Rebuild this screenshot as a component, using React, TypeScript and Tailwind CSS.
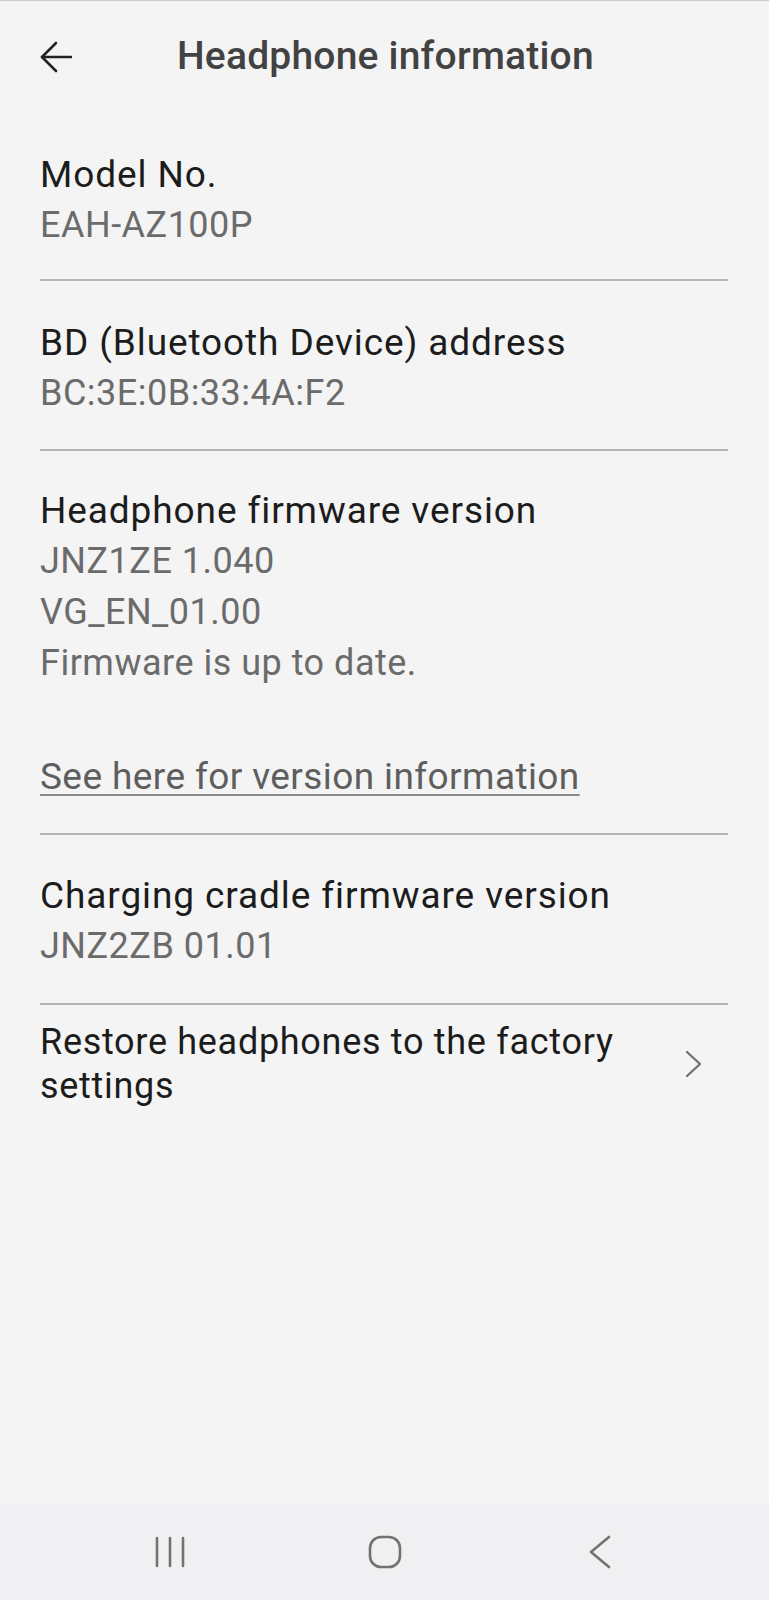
import React from "react";

const Divider = () => <div className="h-[2px] bg-[#b4b4b4]" />;

function Primary({ children }: { children: React.ReactNode }) {
  return <div className="text-[37px] leading-[51px] tracking-[0.9px] text-[#1c1c1c]">{children}</div>;
}
function Secondary({ children }: { children: React.ReactNode }) {
  return <div className="text-[36px] leading-[51px] tracking-[0.5px] text-[#6b6b6b]">{children}</div>;
}

export default function App() {
  return (
    <div
      className="w-[769px] h-[1600px] flex flex-col bg-[#f4f4f4] border-t border-[#cacaca]"
      style={{ fontFamily: "Roboto, 'Noto Sans', sans-serif" }}
    >
      <div className="flex-1 flex flex-col">
        {/* Header */}
        <div className="h-[111px] flex items-center pl-[40px]">
          <svg width="32" height="32" viewBox="0 0 32 32" fill="none" stroke="#222" strokeWidth="2.6" strokeLinecap="round" strokeLinejoin="round">
            <path d="M2 16 H31" />
            <path d="M16 2 L2 16 L16 30" />
          </svg>
          <div className="ml-[105px] text-[39px] leading-none font-medium tracking-[0.2px] text-[#424242]">
            Headphone information
          </div>
        </div>

        <div className="px-[40px] pr-[41px]">
          <div className="pt-[37px] pb-[28px]">
            <Primary>Model No.</Primary>
            <Secondary>EAH-AZ100P</Secondary>
          </div>
          <Divider />
          <div className="pt-[36px] pb-[30px]">
            <Primary>BD (Bluetooth Device) address</Primary>
            <Secondary>BC:3E:0B:33:4A:F2</Secondary>
          </div>
          <Divider />
          <div className="pt-[34px] pb-[31px]">
            <Primary>Headphone firmware version</Primary>
            <Secondary>JNZ1ZE 1.040</Secondary>
            <Secondary>VG_EN_01.00</Secondary>
            <Secondary>Firmware is up to date.</Secondary>
            <div className="mt-[62px] text-[37px] leading-[51px] tracking-[0.4px] text-[#5e5e5e] underline decoration-[#8a8a8a] decoration-2 underline-offset-[5px]">
              See here for version information
            </div>
          </div>
          <Divider />
          <div className="pt-[35px] pb-[31px]">
            <Primary>Charging cradle firmware version</Primary>
            <Secondary>JNZ2ZB 01.01</Secondary>
          </div>
          <Divider />
          <div className="pt-[15px] pb-[15px] flex items-center">
            <div className="flex-1 text-[36px] leading-[44px] tracking-[0.7px] text-[#1c1c1c]">
              Restore headphones to the factory
              <br />
              settings
            </div>
            <svg width="17" height="28" viewBox="0 0 17 28" fill="none" stroke="#6d6d6d" strokeWidth="2.2" strokeLinecap="round" strokeLinejoin="round" className="mr-[26px]">
              <path d="M2 2 L15 14 L2 26" />
            </svg>
          </div>
        </div>
      </div>

      {/* Nav bar */}
      <div className="h-[97px] bg-[#f0f0f2] flex justify-center items-center">
        <div className="w-[215px] flex justify-center">
          <svg width="30" height="32" viewBox="0 0 30 32" fill="none" stroke="#727272" strokeWidth="2.6" strokeLinecap="round">
            <path d="M2 2 V30" />
            <path d="M15 2 V30" />
            <path d="M28 2 V30" />
          </svg>
        </div>
        <div className="w-[215px] flex justify-center">
          <svg width="34" height="34" viewBox="0 0 34 34" fill="none" stroke="#727272" strokeWidth="2.6">
            <rect x="2" y="2" width="30" height="30" rx="11" />
          </svg>
        </div>
        <div className="w-[215px] flex justify-center">
          <svg width="22" height="34" viewBox="0 0 22 34" fill="none" stroke="#727272" strokeWidth="2.6" strokeLinecap="round" strokeLinejoin="round">
            <path d="M20 2 L2 17 L20 32" />
          </svg>
        </div>
      </div>
    </div>
  );
}
